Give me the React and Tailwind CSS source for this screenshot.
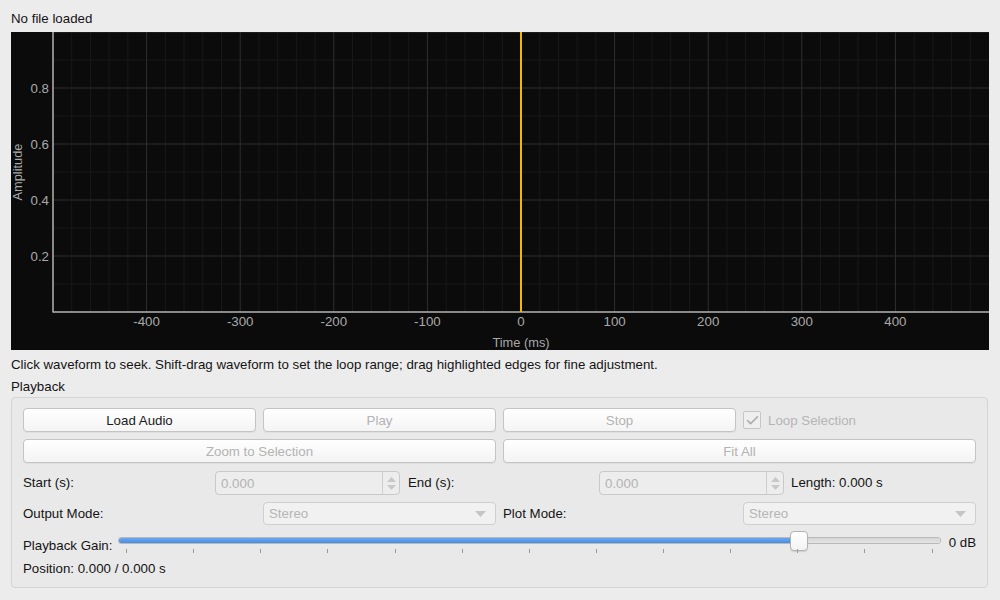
import { Check } from "lucide-react";

const font = { fontFamily: '"Liberation Sans", Arial, sans-serif' };

// plot geometry (local to the dark panel)
const X0 = 42;
const X1 = 978;
const Y_BOTTOM = 280;
const xOf = (ms) => X0 + ((ms + 500) / 1000) * (X1 - X0);
const yOf = (a) => Y_BOTTOM - a * Y_BOTTOM;

const minorX = Array.from({ length: 51 }, (_, i) => -500 + i * 20).filter((v) => v % 100 !== 0);
const majorX = [-400, -300, -200, -100, 0, 100, 200, 300, 400];
const minorY = [0.1, 0.3, 0.5, 0.7, 0.9];
const majorY = [0.2, 0.4, 0.6, 0.8, 1.0];

function Waveform() {
  return (
    <div className="mx-[11px] mt-[5px] h-[318px] w-[978px] bg-[#0b0b0b]">
      <svg width="978" height="318" viewBox="0 0 978 318" style={font}>
        {minorX.map((v) => (
          <line key={"mx" + v} x1={xOf(v)} x2={xOf(v)} y1={0} y2={Y_BOTTOM} stroke="#191919" strokeWidth="1" />
        ))}
        {minorY.map((v) => (
          <line key={"my" + v} x1={X0} x2={X1} y1={yOf(v)} y2={yOf(v)} stroke="#191919" strokeWidth="1" />
        ))}
        {majorX.map((v) => (
          <line key={"Mx" + v} x1={xOf(v)} x2={xOf(v)} y1={0} y2={Y_BOTTOM} stroke="#2f2f2f" strokeWidth="1" />
        ))}
        {majorY.map((v) => (
          <line key={"My" + v} x1={X0} x2={X1} y1={yOf(v)} y2={yOf(v)} stroke="#2f2f2f" strokeWidth="1" />
        ))}

        {/* axes */}
        <line x1={X0} x2={X0} y1={0} y2={Y_BOTTOM + 0.5} stroke="#b4b4b4" strokeWidth="1.5" />
        <line x1={X0} x2={X1} y1={Y_BOTTOM} y2={Y_BOTTOM} stroke="#b4b4b4" strokeWidth="1.5" />

        {/* playhead */}
        <line x1={xOf(0)} x2={xOf(0)} y1={0} y2={Y_BOTTOM} stroke="#f5b800" strokeWidth="2" />

        {[0.2, 0.4, 0.6, 0.8].map((v) => (
          <text key={"ty" + v} x={38} y={yOf(v) + 5} textAnchor="end" fontSize="13.3" fill="#a9a9a9">
            {v.toFixed(1)}
          </text>
        ))}
        {majorX.map((v) => (
          <text key={"tx" + v} x={xOf(v)} y={294} textAnchor="middle" fontSize="13.3" fill="#a9a9a9">
            {v}
          </text>
        ))}
        <text x={xOf(0)} y={315} textAnchor="middle" fontSize="12.8" fill="#a9a9a9">
          Time (ms)
        </text>
        <text
          x={11}
          y={140}
          textAnchor="middle"
          fontSize="12.8"
          fill="#a9a9a9"
          transform="rotate(-90 11 140)"
        >
          Amplitude
        </text>
      </svg>
    </div>
  );
}

function Button({ children, disabled, className = "" }) {
  return (
    <div
      className={`flex h-[24px] items-center justify-center rounded-[4px] border border-[#c4c4c4] bg-gradient-to-b from-[#ffffff] to-[#f4f4f4] pt-px shadow-[0_1px_0_rgba(0,0,0,0.04)] ${
        disabled ? "text-[#b3b3b3]" : "text-[#1a1a1a]"
      } ${className}`}
    >
      {children}
    </div>
  );
}

function SpinBox() {
  return (
    <div className="flex h-[24px] items-stretch rounded-[4px] border border-[#c9c9c9] bg-[#ededed]">
      <div className="flex flex-1 items-center pl-[5px] pt-px text-[#b3b3b3]">0.000</div>
      <div className="flex w-[17px] flex-col items-center justify-center gap-[3px] border-l border-[#cfcfcf]">
        <svg width="9" height="5" viewBox="0 0 9 5">
          <path d="M0 5 L4.5 0 L9 5 Z" fill="#c8c8c8" />
        </svg>
        <svg width="9" height="5" viewBox="0 0 9 5">
          <path d="M0 0 L4.5 5 L9 0 Z" fill="#c8c8c8" />
        </svg>
      </div>
    </div>
  );
}

function Combo() {
  return (
    <div className="flex h-[23px] items-center justify-between rounded-[4px] border border-[#cfcfcf] bg-[#f1f1f1] pl-[5px] pr-[9px] text-[#b5b5b5]">
      <span>Stereo</span>
      <svg width="11" height="6" viewBox="0 0 11 6">
        <path d="M0 0 L5.5 6 L11 0 Z" fill="#c6c6c6" />
      </svg>
    </div>
  );
}

function GainSlider() {
  const ticks = Array.from({ length: 13 });
  return (
    <div className="relative h-[26px] w-[823px]">
      <div className="absolute left-0 right-0 top-[6px] flex h-[7px] overflow-hidden rounded-[3px] border border-[#b9b9b9]">
        <div className="h-full w-[678px] border-r border-[#3c78c8] bg-gradient-to-b from-[#6aa8f0] to-[#4a8ce2]" />
        <div className="h-full flex-1 bg-gradient-to-b from-[#d6d6d6] to-[#e4e4e4]" />
      </div>
      <div className="absolute left-[672px] top-0 h-[20px] w-[18px] rounded-[4px] border border-[#b2b2b2] bg-gradient-to-b from-[#ffffff] to-[#f3f3f3] shadow-[0_1px_1px_rgba(0,0,0,0.12)]" />
      <div className="absolute left-[8px] right-[8px] top-[18px] flex justify-between">
        {ticks.map((_, i) => (
          <div key={i} className="h-[4px] w-px bg-[#9a9a9a]" />
        ))}
      </div>
    </div>
  );
}

export default function App() {
  return (
    <div className="h-[600px] w-[1000px] overflow-hidden bg-[#ececec] text-[13.3px] text-[#141414]" style={font}>
      <div className="flex flex-col pt-[11px]">
        <div className="px-[11px] leading-[16px]">No file loaded</div>

        <Waveform />

        <div className="mt-[7px] px-[11px] leading-[16px]">
          Click waveform to seek. Shift-drag waveform to set the loop range; drag highlighted edges for fine adjustment.
        </div>
        <div className="mt-[6px] px-[11px] leading-[16px]">Playback</div>

        {/* Playback group */}
        <div className="mx-[11px] mt-[2px] flex h-[191px] w-[977px] flex-col rounded-[4px] border border-[#d4d4d4] bg-[#e9e9e9] px-[11px] pt-[10px]">
          <div className="grid grid-cols-4 gap-[7px]">
            <Button>Load Audio</Button>
            <Button disabled>Play</Button>
            <Button disabled>Stop</Button>
            <div className="flex items-center gap-[7px]">
              <div className="flex h-[18px] w-[18px] items-center justify-center rounded-[2px] border border-[#c6c6c6] bg-[#efefef]">
                <Check size={15} strokeWidth={2.6} color="#acacac" />
              </div>
              <span className="pt-px text-[#b5b5b5]">Loop Selection</span>
            </div>
          </div>

          <div className="mt-[7px] grid grid-cols-2 gap-[7px]">
            <Button disabled>Zoom to Selection</Button>
            <Button disabled>Fit All</Button>
          </div>

          <div className="mt-[7px] grid grid-cols-5 items-center gap-[7px] pt-px">
            <span>Start (s):</span>
            <SpinBox />
            <span className="pl-px">End (s):</span>
            <SpinBox />
            <span>Length: 0.000 s</span>
          </div>

          <div className="mt-[7px] grid grid-cols-4 items-center gap-[7px]">
            <span>Output Mode:</span>
            <Combo />
            <span>Plot Mode:</span>
            <Combo />
          </div>

          <div className="mt-[6px] flex items-start">
            <span className="mt-[5px] w-[95px] shrink-0">Playback Gain:</span>
            <GainSlider />
            <span className="ml-[8px] mt-[2px]">0 dB</span>
          </div>

          <div className="mt-[4px] leading-[16px]">Position: 0.000 / 0.000 s</div>
        </div>
      </div>
    </div>
  );
}
